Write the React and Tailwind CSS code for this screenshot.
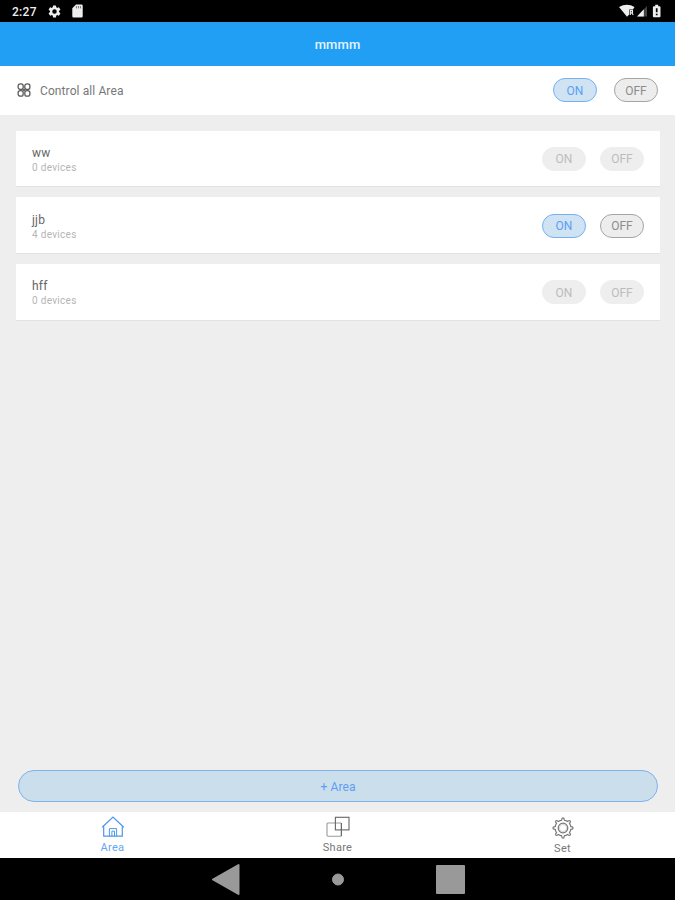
const areas = [
  { name: 'ww', devices: 0 },
  { name: 'jjb', devices: 4 },
  { name: 'hff', devices: 0 },
];

const pillStyles = {
  on: 'border-[#74b0f3] bg-[#d0e3f3] text-[#5a9ff5]',
  off: 'border-[#a5a5a5] bg-[#ededed] text-[#8c8c8c]',
  disabled: 'border-[#eeeeee] bg-[#eeeeee] text-[#bcbcbc]',
};

function Pill({ kind, children }) {
  return (
    <button
      className={`flex h-6 w-11 items-center justify-center rounded-full border pt-px text-xs leading-none ${pillStyles[kind]}`}
    >
      {children}
    </button>
  );
}

function StatusBar() {
  return (
    <div className="flex h-[22px] shrink-0 items-center justify-between bg-black pr-[13px] pl-3 text-[#eeeeee]">
      <div className="flex items-center">
        <span className="w-[35px] pt-px text-xs leading-none font-medium tracking-[0.3px]">2:27</span>
        <svg className="h-[15px] w-[15px]" viewBox="0 0 24 24" fill="currentColor">
          <path d="M19.14 12.94c.04-.3.06-.61.06-.94s-.02-.64-.07-.94l2.03-1.58a.5.5 0 0 0 .12-.61l-1.92-3.32a.49.49 0 0 0-.59-.22l-2.39.96a7 7 0 0 0-1.62-.94l-.36-2.54a.48.48 0 0 0-.48-.41h-3.84a.47.47 0 0 0-.47.41l-.36 2.54c-.59.24-1.13.57-1.62.94l-2.39-.96a.48.48 0 0 0-.59.22L2.74 8.87a.47.47 0 0 0 .12.61l2.03 1.58a7 7 0 0 0 0 1.88l-2.03 1.58a.5.5 0 0 0-.12.61l1.92 3.32c.12.22.37.29.59.22l2.39-.96c.5.38 1.03.7 1.62.94l.36 2.54c.05.24.24.41.48.41h3.84c.24 0 .44-.17.47-.41l.36-2.54a6.8 6.8 0 0 0 1.62-.94l2.39.96c.22.08.47 0 .59-.22l1.92-3.32a.47.47 0 0 0-.12-.61zM12 15.6a3.6 3.6 0 1 1 0-7.2 3.6 3.6 0 0 1 0 7.2z" />
        </svg>
        <svg className="ml-2.5 h-[14px] w-[11px]" viewBox="0 0 11 14">
          <path d="M4 .5h5.5a1.2 1.2 0 0 1 1.2 1.2v10.6a1.2 1.2 0 0 1-1.2 1.2h-8a1.2 1.2 0 0 1-1.2-1.2V4.2z" fill="currentColor" />
          <path d="M4.4 2v2.4M6.4 2v2.4M8.4 2v2.4" stroke="#777777" strokeWidth="1" />
        </svg>
      </div>
      <svg className="h-[14px] w-[43px]" viewBox="0 0 43 14">
        <path d="M0 3Q8-1.6 15.5 3L14 5.4h-3.8v5L8 12.8z" fill="currentColor" />
        <path d="M11.3 11V6.6h2.2v2.2h-2M12.6 8.8l1.7 2.2" fill="none" stroke="currentColor" strokeWidth="1.1" />
        <path d="M18 12.5 28 2v10.5z" fill="#444444" />
        <path d="M18 12.5 24.8 5.3v7.2z" fill="currentColor" />
        <path d="M36.2.8h3v1.4h1.2a1.1 1.1 0 0 1 1.1 1.1v8.9a1.1 1.1 0 0 1-1.1 1.1H35a1.1 1.1 0 0 1-1.1-1.1V3.3A1.1 1.1 0 0 1 35 2.2h1.2z" fill="currentColor" />
        <path d="M37.7 4.3v4M37.7 9.7v1.5" stroke="#000000" strokeWidth="1.7" />
      </svg>
    </div>
  );
}

function CloverIcon() {
  return (
    <svg className="h-[14px] w-[14px]" viewBox="0 0 14 14" fill="none" stroke="#5c5c5c" strokeWidth="1.3">
      <rect x="1.1" y="0.9" width="5.1" height="5.5" rx="2.2" />
      <rect x="7.8" y="0.9" width="5.1" height="5.5" rx="2.2" />
      <rect x="1.1" y="7.6" width="5.1" height="5.5" rx="2.2" />
      <rect x="7.8" y="7.6" width="5.1" height="5.5" rx="2.2" />
      <path d="M5.5 5.7l3 2.6M8.5 5.7l-3 2.6" strokeWidth="1" />
    </svg>
  );
}

function HomeIcon() {
  return (
    <svg className="h-6 w-6" viewBox="0 0 24 24" fill="none" stroke="#4c98ea" strokeWidth="1.2">
      <path d="M1.2 12.3 12 2l10.8 10.3M2.7 11.5v9.7h18.6v-9.7" />
      <path d="M8.4 21.2v-7.6h7.2v7.6M10.9 21.2v-5h2.6v5" strokeWidth="1" />
    </svg>
  );
}

function ShareIcon() {
  return (
    <svg className="h-6 w-6" viewBox="0 0 24 24" fill="none" strokeWidth="1.1">
      <rect x="1" y="8" width="14.4" height="13.2" rx="1" stroke="#9a9a9a" />
      <path d="M15.4 8v13" stroke="#666666" />
      <rect x="9.4" y="2.3" width="13.6" height="12.6" stroke="#666666" />
    </svg>
  );
}

const toothAngles = [0, 45, 90, 135, 180, 225, 270, 315];

function SettingsIcon() {
  return (
    <svg className="h-6 w-6" viewBox="0 0 24 24" fill="none" stroke="#777777" strokeWidth="1.2">
      {toothAngles.map((angle) => (
        <path
          key={angle}
          transform={`rotate(${angle} 12 12)`}
          d="M8.9 4.6 10.6 4.3 11.1 2.3Q12 1.6 12.9 2.3L13.4 4.3 15.1 4.6"
        />
      ))}
      <circle cx="12" cy="12" r="4.8" />
      <circle cx="12" cy="12" r="3.6" stroke="#bbbbbb" strokeWidth="0.6" />
    </svg>
  );
}

function Tab({ icon, label, className }) {
  return (
    <button className={`flex flex-1 flex-col items-center text-[11px] leading-[14px] tracking-[0.3px] ${className}`}>
      {icon}
      <span className="mt-0.5">{label}</span>
    </button>
  );
}

export default function App() {
  return (
    <div className="flex h-[900px] w-[675px] flex-col overflow-hidden bg-[#eeeeee] font-['Roboto',sans-serif]">
      <StatusBar />
      <header className="flex h-[43.5px] shrink-0 items-center justify-center bg-[#209ff5] pt-px text-[13px] font-medium tracking-[0.1px] text-[#e4f3ff]">
        mmmm
      </header>
      <section className="flex h-[49px] shrink-0 items-center bg-white px-[17px]">
        <CloverIcon />
        <span className="ml-[9px] flex-1 pt-px text-xs tracking-[0.1px] text-[#777777]">Control all Area</span>
        <div className="flex gap-[17px]">
          <Pill kind="on">ON</Pill>
          <Pill kind="off">OFF</Pill>
        </div>
      </section>
      <main className="flex flex-1 flex-col gap-2.5 pt-4 pr-[15px] pl-4">
        {areas.map(({ name, devices }) => (
          <article
            key={name}
            className="flex h-[56.8px] items-center justify-between border-b border-[#e2e2e2] bg-white px-4"
          >
            <div className="pt-[3px]">
              <h2 className="text-xs leading-4 tracking-[0.2px] text-[#666666]">{name}</h2>
              <p className="text-[10px] leading-[14px] tracking-[0.3px] text-[#b5b5b5]">{devices} devices</p>
            </div>
            <div className="flex gap-3.5 pt-px">
              <Pill kind={devices ? 'on' : 'disabled'}>ON</Pill>
              <Pill kind={devices ? 'off' : 'disabled'}>OFF</Pill>
            </div>
          </article>
        ))}
      </main>
      <div className="shrink-0 pr-[17px] pb-2.5 pl-[18px]">
        <button className="flex h-8 w-full items-center justify-center rounded-full border border-[#80b2ec] bg-[#cbdeec] pt-px text-xs tracking-[0.1px] text-[#5b9ef3]">
          + Area
        </button>
      </div>
      <nav className="flex h-[46px] shrink-0 bg-white pt-[3px]">
        <Tab icon={<HomeIcon />} label="Area" className="text-[#66a5f2]" />
        <Tab icon={<ShareIcon />} label="Share" className="text-[#777777]" />
        <Tab icon={<SettingsIcon />} label="Set" className="pt-px text-[#777777]" />
      </nav>
      <div className="flex h-[42px] shrink-0 items-center justify-center bg-black">
        <svg className="h-8 w-[254px]" viewBox="0 0 254 32" fill="#999999" stroke="#999999" strokeLinejoin="round">
          <path d="M2 16.5 27.5 2v29z" strokeWidth="2" />
          <circle cx="127" cy="16.5" r="5.5" strokeWidth="1" />
          <rect x="226" y="3" width="27" height="27" strokeWidth="2" />
        </svg>
      </div>
    </div>
  );
}
